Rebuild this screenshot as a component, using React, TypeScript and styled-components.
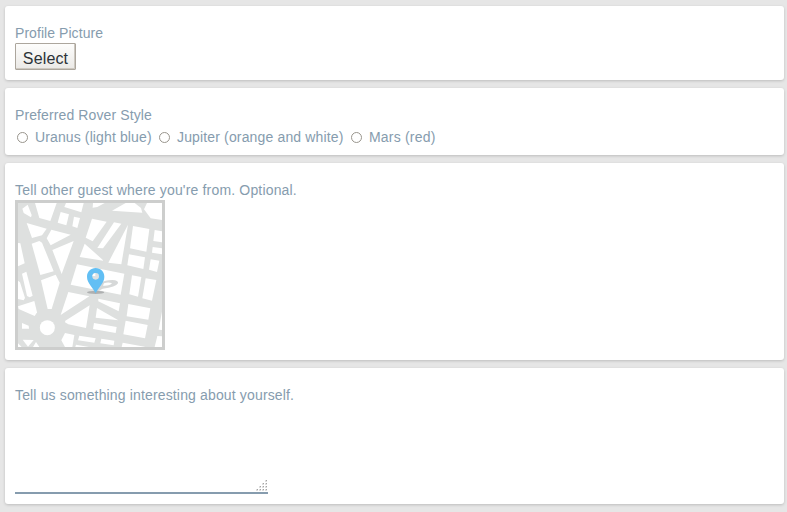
import React from "react";
import styled, { createGlobalStyle } from "styled-components";

const GlobalStyle = createGlobalStyle`
  * { box-sizing: border-box; }
  body {
    margin: 0;
    background: #e6e6e6;
    color: #869cae;
    font: 14px/20px "Liberation Sans", Arial, sans-serif;
    overflow: hidden;
  }
`;

const Form = styled.form`
  display: flex;
  flex-direction: column;
  gap: 8px;
  padding: 6px 3px 8px 5px;
`;

const Card = styled.section<{ $height: number }>`
  height: ${(p) => p.$height}px;
  padding: 17px 10px 0;
  background: #fff;
  border-radius: 3px;
  box-shadow: 0 1px 3px rgba(0, 0, 0, 0.18);
`;

const Label = styled.div<{ $spacing?: number }>`
  height: 20px;
  white-space: nowrap;
  letter-spacing: ${(p) => p.$spacing ?? 0}px;
`;

const SelectButton = styled.button`
  display: block;
  width: 61px;
  height: 27px;
  padding: 4px 0 0;
  border: 1px solid #aca69d;
  border-radius: 1px;
  box-shadow: inset -1px -1px 0 #cdc8c0;
  background: linear-gradient(#fdfdfc, #ebe9e6);
  color: #2c3338;
  font: 16px/20px "Liberation Sans", Arial, sans-serif;
  letter-spacing: 0.15px;
`;

const RadioRow = styled.div`
  display: flex;
  height: 24px;
  align-items: center;
`;

const RadioLabel = styled.label<{ $width: number; $spacing: number }>`
  display: flex;
  align-items: center;
  width: ${(p) => p.$width}px;
  padding-left: 2px;
  gap: 7px;
  white-space: nowrap;
  letter-spacing: ${(p) => p.$spacing}px;
`;

const Radio = styled.input`
  appearance: none;
  flex: none;
  width: 11px;
  height: 11px;
  margin: 0;
  border: 1px solid #99958d;
  border-radius: 50%;
  background: #fff;
`;

const MapFrame = styled.div`
  width: 150px;
  height: 150px;
  border: 3px solid #cdcecd;
  svg { display: block; }
`;

const Answer = styled.div`
  display: flex;
  align-items: flex-end;
  justify-content: flex-end;
  width: 253px;
  height: 89px;
  border-bottom: 2px solid #869cae;
`;

const blocks = [
  "37,41 53,29 65,60 63,67 41,54",
  "75,24 140,24 121,78 88,69",
  "168,24 221,24 214,52 163,36",
  "152,51 177,58 169,91 143,83",
  "192,65 210,69 202,99 187,94",
  "249,24 284,24 262,36 248,38",
  "347,24 374,24 393,39 397,53 306,47",
  "411,24 456,24 456,75 422,70 402,43",
  "50,84 110,101 96,121 66,129",
  "124,104 182,119 122,151 110,130",
  "65,146 88,138 96,143 131,229 91,240",
  "127,165 191,138 155,237",
  "246,71 290,80 248,139 227,128",
  "312,82 334,86 279,160 262,159",
  "354,89 334,208 295,203",
  "369,93 418,102 409,170 360,160",
  "434,105 456,109 456,142 430,138",
  "428,156 456,160 456,178 426,173",
  "224,146 281,197 209,186",
  "357,178 405,187 400,222 352,211",
  "422,193 448,197 441,231 417,224",
  "24,144 31,145 44,205 24,214",
  "93,256 137,239 149,263 125,342 113,342",
  "201,208 343,236 332,299 182,269",
  "366,241 394,246 384,305 358,298",
  "407,250 439,255 426,317 397,310",
  "36,236 49,230 68,302 59,307 51,303",
  "24,257 30,262 45,309 41,316 24,312",
  "175,291 238,304 152,360",
  "24,334 26,342 74,363 81,352 73,318",
  "166,377 239,331 228,399 175,388 165,382",
  "265,311 330,325 326,349 265,319",
  "261,339 325,376 257,368",
  "355,327 421,340 415,374 350,364",
  "252,384 320,396 317,414 249,402",
  "347,377 413,390 405,430 340,418",
  "36,384 56,392 57,401 36,401",
  "165,414 193,420 187,456 165,456 154,436",
  "208,422 257,430 253,443 204,436",
  "274,431 313,437 311,451 271,445",
  "198,449 237,456 196,456",
  "338,443 404,455 404,456 335,456",
  "456,350 456,405 446,404",
  "442,423 456,424 456,456 434,456",
  "38,434 71,435 54,455",
  "24,445 35,456 24,456",
  "78,441 88,456 69,456",
];

function StreetMap() {
  return (
    <svg width="144" height="144" viewBox="24 24 432 432" role="img" aria-label="Location map">
      <path fill="#dee0df" d="M24 24h432v432H24z" />
      {blocks.map((points) => (
        <polygon key={points} points={points} fill="#fff" />
      ))}
      <circle cx="112" cy="398" r="22.5" fill="#fff" />
      <path
        d="M258 292 273 263Q284 255 307 255Q326 256 324 265Q318 277 278 281Z M279 272Q301 273 306 265Q295 260 282 265Z"
        fill="#d6d8d8"
        fillRule="evenodd"
      />
      <ellipse cx="257" cy="292" rx="26" ry="5" fill="#aeb0b1" />
      <path d="M257 219c-15 0-26 11-26 26 0 20 18 32 26 50 8-18 26-30 26-50 0-15-11-26-26-26Z" fill="#62bff4" />
      <circle cx="257" cy="244" r="10" fill="#dee2e3" />
      <path d="M247 243a10 10 0 0 1 9-9v9Z" fill="#fff" />
    </svg>
  );
}

function ResizeGrip() {
  const dots = [[9, 0], [6, 3], [9, 3], [3, 6], [6, 6], [9, 6], [0, 9], [3, 9], [6, 9], [9, 9]];
  return (
    <svg width="12" height="12" viewBox="0 0 12 12" shapeRendering="crispEdges">
      {dots.map(([x, y]) => (
        <g key={`${x}-${y}`}>
          <path fill="#dedede" d={`M${x} ${y}h2v2h-2z`} />
          <path fill="#a4a4a4" d={`M${x + 1} ${y}h1v1h-1z`} />
        </g>
      ))}
    </svg>
  );
}

const styles = [
  { name: "Uranus (light blue)", width: 142, spacing: 0.12 },
  { name: "Jupiter (orange and white)", width: 192, spacing: 0.15 },
  { name: "Mars (red)", width: 90, spacing: 0.2 },
];

export default function App() {
  return (
    <>
      <GlobalStyle />
      <Form>
        <Card $height={74}>
          <Label $spacing={0.06}>Profile Picture</Label>
          <SelectButton type="button">Select</SelectButton>
        </Card>
        <Card $height={67}>
          <Label $spacing={0.11}>Preferred Rover Style</Label>
          <RadioRow>
            {styles.map((s) => (
              <RadioLabel key={s.name} $width={s.width} $spacing={s.spacing}>
                <Radio type="radio" name="rover" />
                {s.name}
              </RadioLabel>
            ))}
          </RadioRow>
        </Card>
        <Card $height={197}>
          <Label $spacing={0.17}>Tell other guest where you're from. Optional.</Label>
          <MapFrame>
            <StreetMap />
          </MapFrame>
        </Card>
        <Card $height={136}>
          <Label $spacing={0.15}>Tell us something interesting about yourself.</Label>
          <Answer>
            <ResizeGrip />
          </Answer>
        </Card>
      </Form>
    </>
  );
}
